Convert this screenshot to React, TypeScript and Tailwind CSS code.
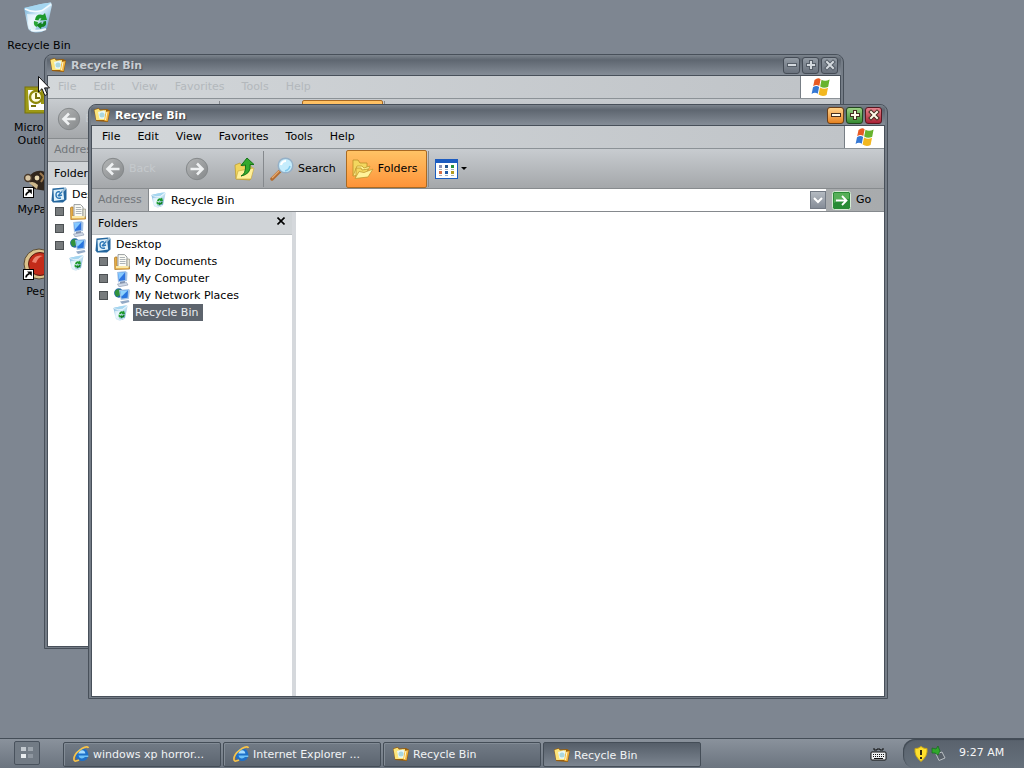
import { useId } from "react";
import type { ReactNode } from "react";

type IconProps = { className?: string };

function BinIcon({ className = "size-4" }: IconProps) {
  const id = useId();
  return (
    <svg viewBox="0 0 32 32" className={className} aria-hidden="true">
      <defs>
        <linearGradient id={id} x1="0" y1="0" x2="1" y2="1">
          <stop offset="0" stopColor="#5fa3cf" />
          <stop offset="0.45" stopColor="#d9effb" />
          <stop offset="1" stopColor="#4f93c0" />
        </linearGradient>
      </defs>
      <path d="M1 6 L18 2 L28 0.5 L29 3 L24 26 Q19 32 10 30 Q6 29 5 26 Z" fill={`url(#${id})`} />
      <path d="M1 6 L18 2 L28 0.5 L19 8 Q9 10 1 6Z" fill="#a5d6f0" />
      <path d="M2 7 Q10 11 19 8.5 L28 2.5" fill="none" stroke="#f4fbff" strokeWidth="1.4" />
      <path d="M4 12 L18 13 L12 28 L6 27Z" fill="#f4fbff" opacity="0.7" />
      <path d="M8 28 Q15 30 23 27" fill="none" stroke="#f1faff" strokeWidth="2" />
      <path d="M12 18 Q13 11 20 13 L22 11 L24 18 L17 18.5 L18.5 16.5 Q16 15.5 15.5 18.5Z" fill="#1d9a2b" />
      <path d="M23 19 Q24 25 18.5 25 L18 27 L13 23 L18.5 20 L18.5 22 Q20.5 22 20.5 19.5Z" fill="#128321" />
      <path d="M11 19 L15 20 L14 25 Q10 24 11 19Z" fill="#27a537" />
    </svg>
  );
}

function FolderBinIcon({ className = "size-4" }: IconProps) {
  return (
    <svg viewBox="0 0 16 16" className={className} aria-hidden="true">
      <path d="M0 2.5 L4.5 1 L6.5 2.5 L13 2 L16 3.5 L14 15 L2 14 Z" fill="#9a5f0c" />
      <path d="M0.5 3 L4.5 1.8 L6 3.6 L12 3 L12 13 L2.2 13Z" fill="#fce57c" />
      <path d="M11.5 5 L15.5 4 L13.5 14.3 L10.3 13.8Z" fill="#f3b640" />
      <path d="M4 5 L10 3.6 L11.5 5 L10 12 L5.5 11.8Z" fill="#e8f7f7" />
      <circle cx="8" cy="8" r="2.5" fill="#a9d6df" />
      <path d="M13 4.8 L11.5 13" stroke="#fff8d0" strokeWidth="1" />
    </svg>
  );
}

function DesktopIcon() {
  return (
    <svg viewBox="0 0 16 16" className="size-4 shrink-0" aria-hidden="true">
      <path d="M1.5 1.5 L13 0.5 L15.5 2 L15.5 12.5 L12 15.5 L2 15.5 L0.5 13.5Z" fill="#24669e" />
      <path d="M2.5 3 L12 2 L13.2 12.4 L3 14Z" fill="#dff2fb" />
      <path d="M9 5 Q5 4 5 8 Q5 12 10 11 M7 9 L11.5 4 M7.5 9.2 L11 8" fill="none" stroke="#2a76b5" strokeWidth="1.4" />
      <path d="M11 5 L15 0.8" stroke="#9ec0d8" strokeWidth="2" />
    </svg>
  );
}

function DocumentsIcon() {
  return (
    <svg viewBox="0 0 16 16" className="size-4 shrink-0" aria-hidden="true">
      <path d="M0.5 4 Q0.5 2.5 3 3 V12 L15.5 12 V15 L0.8 15.5Z" fill="#e9b149" stroke="#a97320" strokeWidth="0.7" />
      <path d="M4 0.6 H10.5 L13 3 V12.5 H4Z" fill="#fcfcf6" stroke="#7f8488" strokeWidth="0.8" />
      <path d="M5.8 3.5 H11 M5.8 5.5 H11.5 M5.8 7.5 H11.5 M5.8 9.5 H11.5" stroke="#9ba2a8" strokeWidth="0.8" />
      <path d="M13 5 L15.5 5 V13 H13Z" fill="#e6e4d5" stroke="#8c8a7b" strokeWidth="0.6" />
      <path d="M2 12 H14.5 V14.2 H2Z" fill="#fbe8a6" />
    </svg>
  );
}

function ComputerIcon() {
  return (
    <svg viewBox="0 0 16 16" className="size-4 shrink-0" aria-hidden="true">
      <path d="M3 1 L11.5 0 L13.5 1.5 L13 10 L4 11.5Z" fill="#a9c5e6" />
      <path d="M4 2 L11.2 1.2 L11.2 9 L5 10Z" fill="#2e74e0" />
      <path d="M4 2 L11.2 1.2 L5 8.5Z" fill="#86c9ff" />
      <path d="M6 11 L11 10 L11 12.5 L6 13Z" fill="#8492ad" />
      <path d="M3.5 13 L12.5 11.5 L14 14 L5 15.8Z" fill="#cfd8e6" stroke="#8593ad" strokeWidth="0.6" />
    </svg>
  );
}

function NetworkIcon() {
  return (
    <svg viewBox="0 0 16 16" className="size-4 shrink-0" aria-hidden="true">
      <circle cx="4.8" cy="5" r="4.7" fill="#2469ad" />
      <path d="M1 3 Q3 0.5 6 1.5 L6 7 L3 9 Q0 6 1 3Z" fill="#31923d" />
      <path d="M5 2 L15 1 L16 2.5 L14.8 11 L6.8 12Z" fill="#a6c5e6" />
      <path d="M6.2 3 L14 2.2 L13.6 9.8 L7.6 10.6Z" fill="#2876df" />
      <path d="M6.2 3 L14 2.2 L7.4 8.8Z" fill="#8fd3fc" />
      <path d="M6 13.5 L14.5 12 L15.5 14 L8 16Z" fill="#93aac6" />
    </svg>
  );
}

function FlagIcon() {
  return (
    <svg viewBox="0 0 20 20" className="size-5" aria-hidden="true">
      <path d="M3.5 3 Q7 0 9.6 2.2 L8.3 9 Q5.5 7 2.2 9.3Z" fill="#e75a24" />
      <path d="M10.5 2.8 Q14 5 18.6 2.5 L17.2 9.8 Q13 12 9.2 9.6Z" fill="#67b32e" />
      <path d="M2 10.3 Q5.5 8 8.1 10 L6.8 16.8 Q4 14.5 0.6 17Z" fill="#3578d4" />
      <path d="M9 10.6 Q13 13 17 10.8 L15.6 18 Q11.5 20 7.6 17.6Z" fill="#f2b71f" />
    </svg>
  );
}

function NavArrow({ back = false }: { back?: boolean }) {
  const id = useId();
  return (
    <svg viewBox="0 0 24 24" className="size-6" aria-hidden="true">
      <defs>
        <linearGradient id={id} x1="0" y1="0" x2="1" y2="1">
          <stop offset="0" stopColor="#b4b6b7" />
          <stop offset="1" stopColor="#85888a" />
        </linearGradient>
      </defs>
      <circle cx="12" cy="12" r="10.7" fill={`url(#${id})`} stroke="#84888a" />
      <g fill="none" stroke="#eff1f2" strokeWidth="2.6">
        {back ? <path d="M18.5 12 H7 M12 6.5 L6.5 12 L12 17.5" /> : <path d="M5.5 12 H17 M12 6.5 L17.5 12 L12 17.5" />}
      </g>
    </svg>
  );
}

function UpFolderIcon() {
  return (
    <svg viewBox="0 0 24 24" className="size-6" aria-hidden="true">
      <path d="M2 8 L7 6 L9 9 L17 8 L20 12 L17 23 L3 22Z" fill="#f1d55b" stroke="#b9982b" strokeWidth="0.7" />
      <path d="M5 14 L21 11 L18 22 L3 22Z" fill="#fff09a" stroke="#c5a63b" strokeWidth="0.6" />
      <path d="M8 19 Q13 17 12.5 8 L8 8.5 L14 1 L21 7.5 L17 7.5 Q18.5 17 8 19Z" fill="#35a92e" stroke="#147418" />
    </svg>
  );
}

function SearchIcon() {
  return (
    <svg viewBox="0 0 24 24" className="size-6" aria-hidden="true">
      <path d="M10 14 L2 22" stroke="#b36c31" strokeWidth="3.5" strokeLinecap="round" />
      <path d="M9 14 L2 21" stroke="#e6aa70" strokeWidth="1.2" />
      <circle cx="15.5" cy="8.5" r="7.3" fill="#c5ecfc" stroke="#95b0c7" strokeWidth="1.5" />
      <path d="M11 8 Q12 4 16 4" fill="none" stroke="#fff" strokeWidth="2.2" />
      <path d="M20 9 Q19 13 15 14" fill="none" stroke="#82c9ed" strokeWidth="1.5" />
    </svg>
  );
}

function FoldersIcon() {
  return (
    <svg viewBox="0 0 24 24" className="size-6" aria-hidden="true">
      <path d="M3 3 L8 3 L10 6 L17 6 L17 11 L8 16 L3 19Z" fill="#f3d75f" stroke="#b9912a" strokeWidth="0.8" />
      <path d="M3 19 L7 9 L12 9 L14 11 L20 9 L16 17Z" fill="#fff08f" stroke="#c29c31" strokeWidth="0.8" />
      <path d="M6 11 L11 11 L12 13 L18 12 L17 20 L6 21Z" fill="#f3d75f" stroke="#bd942d" strokeWidth="0.8" />
      <path d="M5 21.5 L9 14.5 L14 15.5 L23 12 L18 20Z" fill="#fff39b" stroke="#c39b34" strokeWidth="0.8" />
    </svg>
  );
}

function ViewsIcon() {
  return (
    <svg viewBox="0 0 23 20" className="h-5 w-[23px]" aria-hidden="true">
      <rect x="0.5" y="0.5" width="22" height="19" fill="#fff" stroke="#1c5dc0" />
      <rect x="0" y="0" width="23" height="4" fill="#1d5cc0" />
      <rect x="4" y="6" width="3" height="3" fill="#8990b5" />
      <rect x="10" y="6" width="3" height="3" fill="#28578f" />
      <rect x="16" y="6" width="3" height="3" fill="#27913b" />
      <rect x="4" y="12" width="3" height="3" fill="#d56e46" />
      <rect x="10" y="12" width="3" height="3" fill="#235ba5" />
      <rect x="16" y="12" width="3" height="3" fill="#b39b20" />
      <path d="M4 10.5 H7 M10 10.5 H13 M16 10.5 H19 M4 16.5 H7 M10 16.5 H13 M16 16.5 H19" stroke="#a9b1bd" />
    </svg>
  );
}

function BrowserIcon() {
  return (
    <svg viewBox="0 0 16 16" className="size-4 shrink-0" aria-hidden="true">
      <circle cx="9" cy="8.7" r="6.4" fill="#1e70c8" />
      <path d="M5.4 7.4 Q6.2 4.3 9.2 4.3 Q12 4.5 12.3 7.4Z" fill="#a4dcff" />
      <path d="M5.4 9.6 H15.3 V11 H12 Q9.5 13.6 6.4 11.6Z" fill="#6fc2f6" />
      <path d="M15.5 2 Q14.5 -0.5 9 2.5 Q3 6 1.2 11 Q0.2 15.5 3 15 Q5 14.6 6 13.8" fill="none" stroke="#f7c34a" strokeWidth="1.7" />
    </svg>
  );
}

const menus = ["File", "Edit", "View", "Favorites", "Tools", "Help"];
const places = [
  { name: "My Documents", icon: <DocumentsIcon /> },
  { name: "My Computer", icon: <ComputerIcon /> },
  { name: "My Network Places", icon: <NetworkIcon /> },
];

function CaptionButton({ kind, active }: { kind: "Minimize" | "Maximize" | "Close"; active: boolean }) {
  const color = !active
    ? "border-[#454c56] bg-linear-to-b from-[#929aa3] to-[#69717c]"
    : kind === "Minimize"
      ? "border-[#6b3f18] bg-linear-to-b from-[#ffd287] to-[#e5821b]"
      : kind === "Maximize"
        ? "border-[#23461f] bg-linear-to-b from-[#9bd084] to-[#348a31]"
        : "border-[#5a1721] bg-linear-to-b from-[#e5818d] to-[#a91e35]";
  const path = kind === "Minimize" ? "M4 7 H10" : kind === "Maximize" ? "M7 4 V10 M4 7 H10" : "M4 4 L10 10 M10 4 L4 10";
  return (
    <button aria-label={kind} className={`flex size-[17px] items-center justify-center rounded-[3px] border ${color}`}>
      <svg viewBox="0 0 14 14" className="size-[14px]" aria-hidden="true">
        <path d={path} stroke={active ? "#452e20" : "#555d67"} strokeWidth="4" strokeLinecap="square" />
        <path d={path} stroke={active ? "#fffbe9" : "#d4d9de"} strokeWidth="2" strokeLinecap="square" />
      </svg>
    </button>
  );
}

function ExplorerWindow({ active, place }: { active: boolean; place: string }) {
  const addressId = useId();
  return (
    <section
      aria-label="Recycle Bin"
      className={`absolute flex h-[595px] w-[800px] flex-col overflow-hidden rounded-t-lg border border-[#48505a] bg-[#747c86] px-[2px] pb-px ${place}`}
    >
      <header className="flex h-5 shrink-0 items-center bg-linear-to-b from-[#7c848d] via-[#5e6670] via-25% to-[#858d97] pr-[3px] pl-[3px]">
        <FolderBinIcon />
        <h1 className={`ml-[5px] grow pt-[2px] text-[11px] font-bold ${active ? "text-white [text-shadow:1px_1px_1px_#30353c]" : "text-[#c8cdd2] [text-shadow:1px_1px_1px_#4b525c]"}`}>
          Recycle Bin
        </h1>
        <div className="flex gap-[2px]">
          <CaptionButton kind="Minimize" active={active} />
          <CaptionButton kind="Maximize" active={active} />
          <CaptionButton kind="Close" active={active} />
        </div>
      </header>
      <div className="flex min-h-0 grow flex-col border border-[#48505a] bg-white">
        <div className="flex h-[23px] shrink-0 border-b border-[#8c9297] bg-linear-to-r from-[#d3d7da] to-[#bfc3c7]">
          <nav className={`flex grow items-center gap-px border-r border-[#777e85] pl-[2px] ${active ? "text-black" : "text-[#b3b8bc]"}`}>
            {menus.map((menu) => (
              <button key={menu} className="px-2">{menu}</button>
            ))}
          </nav>
          <div className="flex w-[39px] items-center justify-center bg-white">
            <FlagIcon />
          </div>
        </div>
        <div className="flex h-10 shrink-0 items-center border-b border-[#878b8e] bg-linear-to-b from-[#c8ccd0] to-[#a4a7aa] pl-[9px]">
          <button className="flex items-center gap-1">
            <NavArrow back />
            <span className="w-14 pt-[2px] text-left text-[#c5c9cc]">Back</span>
          </button>
          <button aria-label="Forward"><NavArrow /></button>
          <button aria-label="Up" className="ml-6"><UpFolderIcon /></button>
          <div className="mx-[6px] h-9 border-l border-[#85898d]" />
          <button className="flex items-center gap-1"><SearchIcon /><span className="pt-px">Search</span></button>
          <button className="ml-[10px] flex h-[38px] w-[81px] items-center gap-1 rounded-xs border border-[#a96a23] bg-linear-to-b from-[#ffc365] to-[#fd9338] pl-[3px]">
            <FoldersIcon />
            <span className="pt-[2px]">Folders</span>
          </button>
          <div className="ml-px h-9 border-l border-[#85898d]" />
          <button aria-label="Views" className="ml-[6px] flex items-center gap-[3px]">
            <ViewsIcon />
            <svg viewBox="0 0 6 3" className="h-[3px] w-[6px]" aria-hidden="true"><path d="M0 0 H6 L3 3Z" /></svg>
          </button>
        </div>
        <div className="flex h-[23px] shrink-0 items-stretch border-b border-[#85898d] bg-linear-to-r from-[#b5b8bb] to-[#a8abad]">
          <label htmlFor={addressId} className="flex w-[57px] items-center border-r border-[#85898d] pt-px pl-[6px] text-[#72767a]">Address</label>
          <div className="flex grow items-center gap-1 bg-white pl-[2px]">
            <BinIcon />
            <input id={addressId} defaultValue="Recycle Bin" className="min-w-0 grow bg-transparent pt-[2px] outline-none" />
            <button aria-label="Address list" className="flex h-[18px] w-4 items-center justify-center border border-[#737a84] bg-linear-to-b from-[#b4bac1] to-[#858c97]">
              <svg viewBox="0 0 10 8" className="h-2 w-[10px]" fill="none" stroke="#fff" strokeWidth="2" aria-hidden="true"><path d="M1 2 L5 6 L9 2" /></svg>
            </button>
          </div>
          <button className="flex w-[58px] items-center gap-[5px] pl-[6px]">
            <svg viewBox="0 0 19 19" className="size-[19px]" aria-hidden="true">
              <rect x="0.5" y="0.5" width="18" height="18" rx="2" fill="#288b35" stroke="#d6ebd4" />
              <path d="M2 2 H17 V8 Q9 7 2 12Z" fill="#56af58" />
              <path d="M4 9.5 H14 M10 5 L14.5 9.5 L10 14" fill="none" stroke="#fff" strokeWidth="1.8" />
            </svg>
            <span className="pt-px">Go</span>
          </button>
        </div>
        <div className="flex min-h-0 grow">
          <aside className="w-[204px] shrink-0 border-r-4 border-[#d5d8dc]">
            <div className="flex h-[23px] items-center justify-between border-b border-[#bbc0c3] bg-[#d0d4d7] pl-[6px]">
              <h2 className="pt-[2px]">Folders</h2>
              <button aria-label="Close folders" className="mr-[7px] mb-[5px]">
                <svg viewBox="0 0 8 8" className="size-2" stroke="#000" strokeWidth="1.6" aria-hidden="true"><path d="M0.5 0.5 L7.5 7.5 M7.5 0.5 L0.5 7.5" /></svg>
              </button>
            </div>
            <ul className="pt-px pl-[3px] whitespace-nowrap">
              <li>
                <button className="flex h-[17px] items-center gap-[5px]"><DesktopIcon /><span className="pt-[2px]">Desktop</span></button>
                <ul className="pl-[4px]">
                  {places.map((entry) => (
                    <li key={entry.name} className="flex h-[17px] items-center">
                      <button aria-label={`Expand ${entry.name}`} className="size-[9px] border border-[#4c5053] bg-[#777b7d]" />
                      <button className="ml-[6px] flex items-center gap-[5px]">{entry.icon}<span className="pt-[2px]">{entry.name}</span></button>
                    </li>
                  ))}
                  <li className="flex h-[17px] items-center pl-[14px]">
                    <button className="flex items-center gap-1">
                      <BinIcon />
                      <span className={active ? "bg-[#5d646d] pr-[5px] pl-[2px] leading-[17px] text-[#e8ebee]" : "px-[2px]"}>Recycle Bin</span>
                    </button>
                  </li>
                </ul>
              </li>
            </ul>
          </aside>
          <main className="grow" />
        </div>
      </div>
    </section>
  );
}

function ShortcutArrow() {
  return (
    <g>
      <rect x="0.5" y="21.5" width="10" height="10" fill="#fff" stroke="#000" />
      <path d="M3 29.5 Q3 27 6.5 25.5" fill="none" stroke="#000" strokeWidth="1.6" />
      <path d="M4 23.5 H8.8 V28.3Z" />
    </g>
  );
}

function DesktopItem({ icon, children }: { icon: ReactNode; children: ReactNode }) {
  return (
    <li className="h-[82px]">
      <button className="flex w-full flex-col items-center gap-[5px] leading-[13px]">
        {icon}
        <span>{children}</span>
      </button>
    </li>
  );
}

function TaskButton({ icon, children, pressed = false }: { icon: ReactNode; children: ReactNode; pressed?: boolean }) {
  return (
    <button
      aria-pressed={pressed}
      className={`flex h-[25px] w-[158px] items-center gap-1 rounded-xs border border-[#444d57] text-[#f1f3f5] ${
        pressed
          ? "bg-linear-to-b from-[#555e69] to-[#7c8590] pt-[2px] pl-[10px]"
          : "bg-linear-to-b from-[#727b86] to-[#5c6570] pl-[9px] shadow-[inset_1px_1px_0_#838c96]"
      }`}
    >
      {icon}
      <span className="pt-[2px]">{children}</span>
    </button>
  );
}

export default function App() {
  return (
    <div className="relative flex h-screen flex-col overflow-hidden bg-[#7e8691] font-['DejaVu_Sans',Verdana,sans-serif] text-[11px] text-black">
      <ul className="w-[78px] grow pt-[2px]">
        <DesktopItem icon={<BinIcon className="size-8" />}>Recycle Bin</DesktopItem>
        <DesktopItem
          icon={
            <svg viewBox="0 0 32 32" className="size-8" aria-hidden="true">
              <rect x="2" y="3" width="28" height="26" fill="#9d9915" stroke="#77730b" />
              <path d="M5 6 H18 V20 H24 V26 H6Z" fill="#fff" />
              <circle cx="13" cy="13" r="6" fill="#fffce0" stroke="#8f890a" strokeWidth="2.4" />
              <path d="M13 9 V14 H17 M8 22 H13" stroke="#77710a" strokeWidth="2" fill="none" />
            </svg>
          }
        >
          Microsoft Outlook
        </DesktopItem>
        <DesktopItem
          icon={
            <svg viewBox="0 0 32 32" className="size-8" aria-hidden="true">
              <path d="M5 12 Q12 2 22 6 Q31 9 30 22 L24 25 L11 23Z" fill="#30251c" />
              <circle cx="5" cy="12" r="3.4" fill="#d8c6a4" stroke="#4b3b2c" strokeWidth="1.5" />
              <path d="M6 17 Q10 14 15 19 L14 23Z" fill="#cdb88c" />
              <circle cx="14" cy="12" r="2.4" fill="#e5d5af" />
              <path d="M17 7 L21 11 L18 16" fill="none" stroke="#9a7950" strokeWidth="2" />
              <ShortcutArrow />
            </svg>
          }
        >
          MyPaint
        </DesktopItem>
        <DesktopItem
          icon={
            <svg viewBox="0 0 32 32" className="size-8" aria-hidden="true">
              <circle cx="16" cy="16" r="15" fill="#dac28c" stroke="#594b33" />
              <circle cx="17" cy="16" r="11.5" fill="#c32b19" stroke="#571b12" />
              <path d="M9 14 Q12 6 20 8 Q15 9 13 15Z" fill="#ed816d" />
              <ShortcutArrow />
            </svg>
          }
        >
          Pegs
        </DesktopItem>
      </ul>

      <ExplorerWindow active={false} place="top-[54px] left-[44px]" />
      <ExplorerWindow active place="top-[104px] left-[88px]" />

      <footer className="flex h-[30px] shrink-0 items-center border-t border-[#444d57] bg-linear-to-b from-[#8a929c] to-[#6b747f] pl-[14px]">
        <button aria-label="Start" className="mb-[2px] flex h-6 w-[26px] items-center justify-center rounded-xs border border-[#49525d] bg-[#727b85]">
          <svg viewBox="0 0 12 12" className="size-3" aria-hidden="true">
            <path d="M0 0 H5 V4 H0Z" fill="#c4cad0" /><path d="M7 0 H12 V4 H7Z" fill="#9da5ad" />
            <path d="M0 7 H5 V11 H0Z" fill="#e8ecef" /><path d="M7 7 H12 V11 H7Z" fill="#8e969f" />
          </svg>
        </button>
        <nav className="ml-[23px] flex grow gap-[2px] pt-px">
          <TaskButton icon={<BrowserIcon />}>windows xp horror...</TaskButton>
          <TaskButton icon={<BrowserIcon />}>Internet Explorer ...</TaskButton>
          <TaskButton icon={<FolderBinIcon />}>Recycle Bin</TaskButton>
          <TaskButton icon={<FolderBinIcon />} pressed>Recycle Bin</TaskButton>
        </nav>
        <button aria-label="Keyboard" className="mr-4">
          <svg viewBox="0 0 17 14" className="h-[14px] w-[17px]" aria-hidden="true">
            <path d="M4 1 V3 H7 V2 H10 V3 H13 V1" fill="none" stroke="#111" />
            <rect x="1" y="5" width="15" height="8" rx="1" fill="#eef0f1" stroke="#111" />
            <path d="M3 7.5 H15 M3 9.5 H15" stroke="#111" strokeDasharray="1 1" /><path d="M4 11.5 H13" stroke="#111" />
          </svg>
        </button>
        <div className="flex h-full w-[121px] items-center rounded-l-xl bg-linear-to-b from-[#59626d] to-[#66707b] pl-[10px] text-[#f5f6f7] shadow-[inset_1px_1px_1px_#414a54]">
          <svg viewBox="0 0 16 16" className="size-4" aria-hidden="true">
            <path d="M8 0.5 Q11 3 14 2.5 Q15 10 8 15.5 Q1 10 2 2.5 Q5 3 8 0.5Z" fill="#ffe02d" stroke="#c8a718" />
            <path d="M8 4 V9 M8 11 V13" stroke="#2f2910" strokeWidth="2" />
          </svg>
          <svg viewBox="0 0 16 16" className="ml-[2px] size-4" aria-hidden="true">
            <path d="M5 8 L11 6 L14 12 L8 14.5Z" fill="#586069" stroke="#b9bfc3" />
            <path d="M1 2 L5 3 L7 0 L9 5 L7 9 L4 7 L1 7Z" fill="#30a82c" stroke="#156b1c" strokeWidth="0.7" />
          </svg>
          <time className="ml-3">9:27 AM</time>
        </div>
      </footer>

      <svg viewBox="0 0 12 21" className="absolute top-[76px] left-[38px] h-[21px] w-3" aria-hidden="true">
        <path d="M0.5 0.5 V16 L4 12.7 L6.8 19.5 L9.3 18.4 L6.5 11.9 H11.5Z" fill="#fff" stroke="#111" />
      </svg>
    </div>
  );
}
